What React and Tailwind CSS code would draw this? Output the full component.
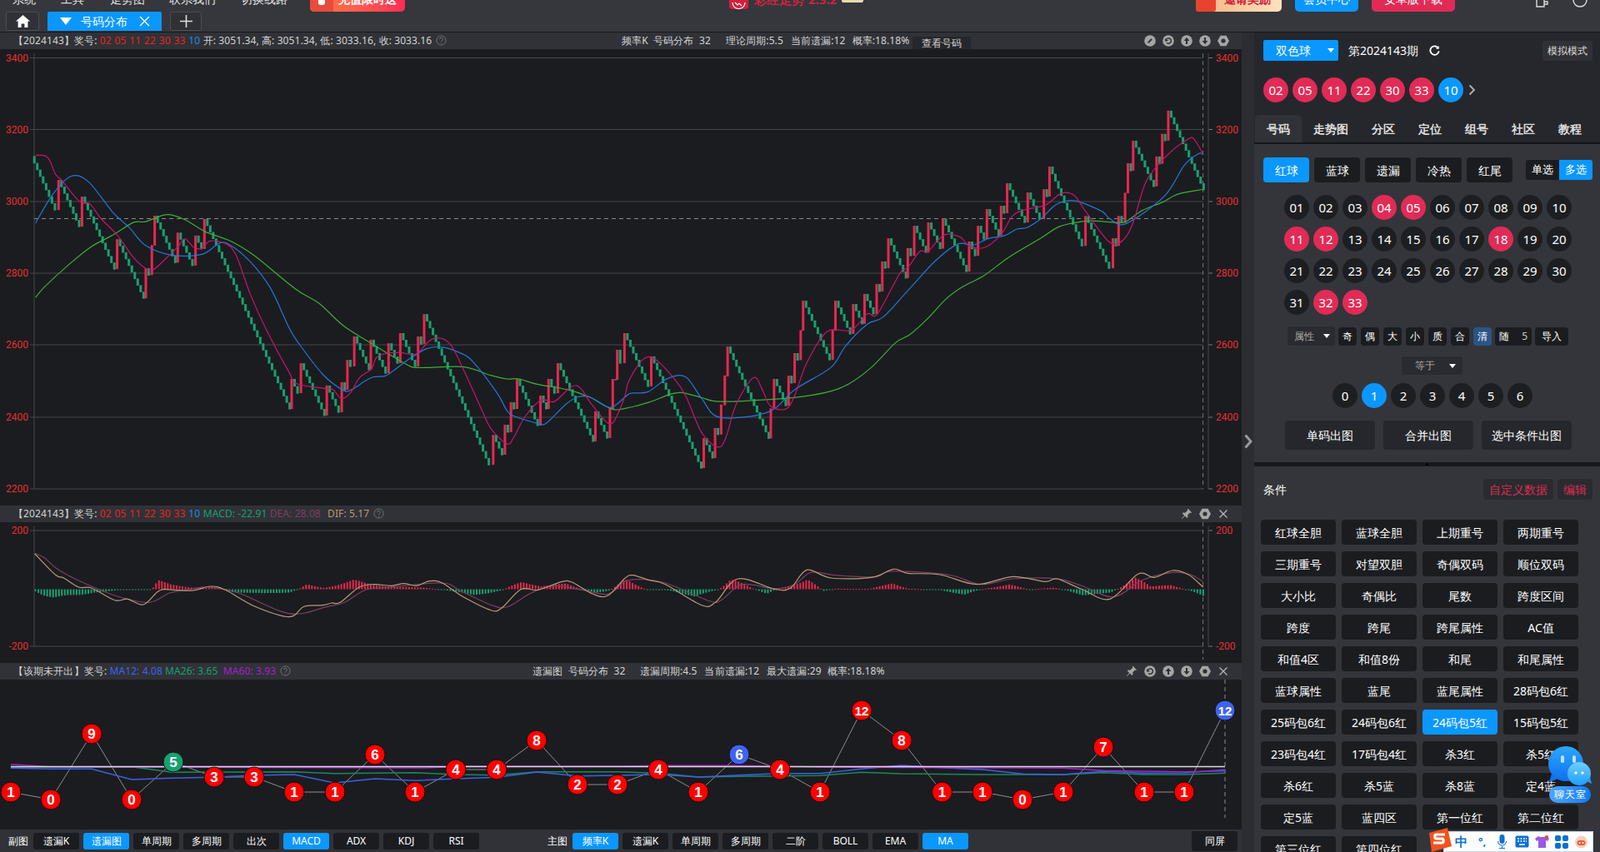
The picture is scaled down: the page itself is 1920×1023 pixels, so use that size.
import React from "react";

const m8 = (a) => a.map(([x, y]) => [x / 2.063, 50 + y / 2.8]);
const m9 = (a) => a.map(([x, y]) => [750 + x / 2.063, 50 + y / 2.8]);
const m6 = (a) => a.map(([x, y]) => [x / 1.96, 600 + y / 3]);
const m7 = (a) => a.map(([x, y]) => [750 + x / 2.063, 600 + y / 3]);
const line = (a) => a.map(([x, y]) => `${x.toFixed(1)},${y.toFixed(1)}`).join(" ");

// catmull-rom through the points, so the average lines don't look like broken sticks
function smooth(a) {
  let d = `M${a[0][0].toFixed(1)} ${a[0][1].toFixed(1)}`;
  for (let i = 0; i < a.length - 1; i++) {
    const p0 = a[i - 1] || a[i];
    const p1 = a[i];
    const p2 = a[i + 1];
    const p3 = a[i + 2] || p2;
    const c1 = [p1[0] + (p2[0] - p0[0]) / 6, p1[1] + (p2[1] - p0[1]) / 6];
    const c2 = [p2[0] - (p3[0] - p1[0]) / 6, p2[1] - (p3[1] - p1[1]) / 6];
    d += `C${c1[0].toFixed(1)} ${c1[1].toFixed(1)} ${c2[0].toFixed(1)} ${c2[1].toFixed(1)} ${p2[0].toFixed(1)} ${p2[1].toFixed(1)}`;
  }
  return d;
}

// red bars of the main chart: x, top
const reds = [
  ...m8([[145,465],[203,521],[290,664],[361,762],[376,684],[383,585],[440,642],[484,652],[506,596],[722,1134],[745,1081],[809,1156],[846,1145],[860,1070],[877,991],[918,1002],[962,1014],[991,980],[1035,991],[1050,916],[1221,1322],[1250,1288],[1265,1212],[1280,1134],[1338,1190],[1358,1134],[1381,1081],[1474,1243],[1510,1232],[1517,1134],[1528,1036],[1546,980]]),
  ...m9([[65,1058],[195,1333],[223,1299],[238,1220],[247,1122],[254,1025],[361,1233],[369,1134],[405,1123],[420,1047],[435,970],[441,871],[514,969],[521,871],[565,882],[593,848],[623,815],[637,739],[652,661],[700,694],[716,619],[751,608],[787,595],[852,672],[874,619],[896,563],[931,552],[946,476],[997,507],[1037,496],[1051,420],[1140,586],[1208,661],[1222,586],[1238,508],[1245,409],[1258,333],[1316,386],[1330,310],[1345,232]]),
];
const PITCH = 3.53;
const RED_H = 36;

function buildBars() {
  const out = [];
  let px = 41.2 - PITCH;
  let py = 50 + 385 / 2.8;
  const all = [...reds, [1443.6, null]];
  all.forEach(([x, top]) => {
    const bottom = top === null ? 50 + 498 / 2.8 : top + RED_H;
    const n = Math.max(0, Math.round((x - px) / PITCH) - (top === null ? 0 : 1));
    const step = n ? (bottom - py) / n : 0;
    if (step > 0) {
      for (let i = 0; i < n; i++) {
        out.push({ x: px + PITCH * (i + 1), y: py + i * step, h: step + 0.6, c: "#18a070" });
      }
    }
    if (top !== null) {
      out.push({ x, y: top, h: RED_H, c: "#e6284f" });
      px = x;
      py = top;
    }
  });
  return out;
}

const ma5 = [
  ...m8([[88,385],[95,381],[115,386],[125,405],[137,445],[155,470],[195,535],[222,545],[250,595],[290,650],[330,725],[360,762],[378,768],[410,730],[440,690],[458,663],[480,692],[500,695],[520,670],[560,680],[585,720],[620,850],[660,970],[715,1110],[735,1150],[800,1165],[825,1170],[845,1200],[868,1180],[890,1130],[920,1100],[930,1065],[950,1050],[990,1045],[1030,1050],[1070,1000],[1112,1013],[1150,1110],[1190,1230],[1215,1300],[1255,1352],[1272,1330],[1300,1260],[1340,1205],[1372,1210],[1415,1160],[1437,1165],[1465,1220],[1508,1285],[1530,1250]]),
  ...m9([[0,1190],[10,1140],[45,1068],[75,1068],[120,1130],[150,1190],[190,1315],[230,1363],[250,1330],[275,1220],[318,1130],[340,1170],[360,1225],[398,1235],[420,1190],[450,1080],[500,975],[560,970],[600,915],[625,915],[680,780],[700,760],[730,705],[750,705],[790,650],[830,657],[850,685],[888,693],[930,650],[960,585],[990,565],[1040,550],[1080,510],[1112,517],[1140,570],[1200,675],[1235,665],[1260,600],[1290,470],[1340,385],[1395,327],[1410,330],[1431,378]]),
];
const ma10 = [
  ...m8([[88,610],[130,515],[175,453],[218,470],[280,575],[320,625],[360,685],[425,718],[500,715],[540,680],[565,680],[620,740],[670,830],[715,960],[740,1015],[800,1120],[850,1172],[870,1170],[905,1140],[925,1127],[955,1123],[980,1100],[1010,1070],[1055,1033],[1095,1027],[1140,1047],[1170,1075],[1230,1180],[1255,1240],[1275,1260],[1335,1285],[1355,1280],[1400,1220],[1430,1195],[1460,1195],[1510,1230]]),
  ...m9([[0,1195],[15,1182],[57,1177],[105,1133],[150,1127],[190,1200],[235,1263],[355,1245],[420,1170],[510,1095],[545,1025],[600,950],[640,925],[705,830],[770,735],[825,680],[860,685],[900,662],[940,652],[970,630],[995,625],[1030,595],[1060,555],[1080,540],[1115,535],[1180,570],[1200,595],[1240,612],[1335,520],[1385,415],[1420,377],[1431,380]]),
];
const ma20 = [
  ...m8([[88,860],[110,825],[170,750],[225,690],[280,650],[330,608],[360,605],[405,583],[425,583],[460,600],[510,640],[570,670],[630,720],[730,830],[790,880],[850,955],[920,1015],[1000,1080],[1035,1096],[1145,1093],[1215,1122],[1255,1134],[1285,1134],[1330,1152],[1405,1170],[1460,1195],[1515,1235]]),
  ...m9([[0,1233],[60,1212],[110,1186],[140,1180],[190,1197],[235,1210],[360,1203],[440,1193],[510,1175],[555,1150],[610,1095],[670,1012],[705,985],[750,930],[795,865],[835,825],[890,785],[950,725],[1030,660],[1075,622],[1130,605],[1165,603],[1215,608],[1240,605],[1280,568],[1330,540],[1370,512],[1431,497]]),
];

const macdTan = [
  ...m6([[82,195],[130,270],[150,282],[185,315],[215,318],[270,362],[300,358],[337,378],[370,332],[385,323],[410,325],[455,327],[495,312],[530,325],[600,385],[680,422],[715,385],[760,380],[780,372],[800,370],[845,315],[880,305],[920,310],[950,302],[980,310],[1010,293],[1040,300],[1090,350],[1155,398],[1180,390],[1225,323],[1265,325],[1320,296],[1345,297],[1395,340],[1430,345]]),
  ...m7([[0,283],[20,272],[60,290],[100,305],[190,380],[225,368],[280,285],[370,322],[410,318],[450,253],[510,282],[610,280],[665,250],[700,265],[780,270],[870,305],[960,277],[1040,295],[1070,285],[1130,322],[1200,358],[1270,268],[1310,280],[1355,255],[1395,270],[1431,315]]),
];
const macdPink = [
  ...m6([[82,193],[105,210],[135,250],[190,295],[270,345],[350,370],[400,335],[450,322],[490,315],[560,335],[680,410],[770,385],[810,370],[860,325],[920,315],[1040,300],[1085,330],[1160,382],[1195,385],[1250,335],[1300,310],[1370,325],[1430,340]]),
  ...m7([[0,295],[40,287],[100,300],[210,365],[240,360],[290,305],[370,320],[420,305],[460,262],[520,272],[620,278],[660,258],[800,270],[880,305],[960,285],[1070,285],[1130,310],[1210,350],[1280,290],[1355,262],[1400,270],[1431,295]]),
];
// histogram outline: negative goes up (red), positive goes down (green), real px
const envelope = [
  ...m6([[80,5],[100,20],[125,32],[185,22],[220,10],[280,3],[355,0],[370,-28],[400,-15],[440,-8],[520,-3],[540,8],[620,18],[680,10],[700,0],[720,-16],[760,-6],[830,-30],[870,-15],[960,-8],[1000,-4],[1040,2],[1110,22],[1180,3],[1225,-32],[1270,-10],[1330,-18],[1400,15],[1430,5]]),
  ...m7([[0,-30],[50,0],[110,5],[170,22],[230,2],[260,-40],[310,-5],[350,15],[370,2],[450,-32],[490,5],[520,-2],[600,-1],[660,-18],[700,-2],[780,3],[840,18],[890,-3],[950,-15],[1000,1],[1060,-7],[1130,18],[1200,15],[1260,-40],[1300,-8],[1350,-17],[1431,22]]),
].map(([x, y]) => [x, y - 600]);

function histBars() {
  const out = [];
  for (let x = 41.5; x < 1443; x += PITCH) {
    let v = 0;
    for (let i = 0; i < envelope.length - 1; i++) {
      const [x1, y1] = envelope[i];
      const [x2, y2] = envelope[i + 1];
      if (x >= x1 && x <= x2) v = y1 + ((y2 - y1) * (x - x1)) / (x2 - x1);
    }
    const j = 1 + 0.2 * Math.sin(x * 1.7);
    out.push({ x, v: v * j });
  }
  return out;
}

const missBalls = [
  [13,951,"1"],[61,960,"0"],[110,881,"9"],[158,960,"0"],[208,915,"5","#18a070"],[257,933,"3"],[305,933,"3"],[353,951,"1"],[402,951,"1"],[450,906,"6"],[498,951,"1"],[547,924,"4"],[596,924,"4"],[644,889,"8"],[693,942,"2"],[741,942,"2"],[790,924,"4"],[838,951,"1"],[887,906,"6","#3f63f0"],[936,924,"4"],[984,951,"1"],[1034,853,"12"],[1082,889,"8"],[1130.5,951,"1"],[1179,951,"1"],[1227,960,"0"],[1276,951,"1"],[1324,897,"7"],[1373,951,"1"],[1421,951,"1"],[1470,853,"12","#3f63f0"],
];
const missBlue = [
  ...m6([[25,967],[120,970],[215,970],[310,1008],[405,1003],[500,1000],[597,993],[692,990],[787,1020],[882,1005],[977,1012],[1073,1005],[1169,1000],[1263,981],[1359,995],[1453,993]]),
  ...m7([[83,990],[182,999],[283,992],[384,986],[483,986],[585,970],[684,957],[785,965],[885,972],[985,988],[1086,990],[1185,978],[1286,985],[1385,984],[1486,973]]),
];
const missGreen = [
  ...m6([[25,963],[310,962],[405,982],[692,980],[787,986],[977,983],[1073,990],[1169,992],[1263,980],[1453,980]]),
  ...m7([[83,985],[182,999],[283,997],[483,994],[585,982],[684,987],[885,990],[1086,990],[1185,983],[1286,990],[1385,990],[1486,985]]),
];
const missPurple = [
  ...m6([[25,953],[120,962],[800,965],[1000,966],[1100,960],[1453,960]]),
  ...m7([[83,958],[283,958],[484,963],[1086,967],[1185,976],[1385,980],[1486,977]]),
];

const PRICES = [[3400,69.5],[3200,155.5],[3000,242],[2800,328],[2600,414],[2400,501],[2200,587]];
const SANS = "Roboto, 'Noto Sans CJK SC', sans-serif";

function MainChart() {
  return (
    <svg className="block w-full h-full" viewBox="0 59 1490 548" style={{ fontFamily: SANS }}>
      {PRICES.map(([p, y]) => (
        <g key={p}>
          <line x1="41" x2="1444" y1={y} y2={y} stroke="#45474b" />
          <line x1="36" x2="41" y1={y} y2={y} stroke="#45474b" />
          <line x1="1450" x2="1455" y1={y} y2={y} stroke="#777" />
          <text x="34" y={y + 4} textAnchor="end" fontSize="12" fill="#e8302c">{p}</text>
          <text x="1459" y={y + 4} fontSize="12" fill="#e8302c">{p}</text>
        </g>
      ))}
      <line x1="41" x2="41" y1="64" y2="587" stroke="#45474b" />
      <line x1="1450" x2="1450" y1="64" y2="587" stroke="#45474b" />
      <line x1="1443.6" x2="1443.6" y1="64" y2="587" stroke="#777" strokeDasharray="5 4" />
      <line x1="41" x2="1444" y1="262.5" y2="262.5" stroke="#8a8a8a" strokeDasharray="5 4" />
      {buildBars().map((b, i) => (
        <rect key={i} x={b.x - 1.5} y={b.y} width="3" height={b.h} fill={b.c} />
      ))}
      <path d={smooth(ma20)} fill="none" stroke="#3cb034" strokeWidth="1.2" />
      <path d={smooth(ma10)} fill="none" stroke="#2278d8" strokeWidth="1.2" />
      <path d={smooth(ma5)} fill="none" stroke="#c8146e" strokeWidth="1.2" />
    </svg>
  );
}

function MacdChart() {
  return (
    <svg className="block w-full h-full" viewBox="0 627 1490 169" style={{ fontFamily: SANS }}>
      {[[200,637],[-200,776]].map(([p, y]) => (
        <g key={p}>
          <line x1="41" x2="1444" y1={y} y2={y} stroke="#45474b" />
          <line x1="36" x2="41" y1={y} y2={y} stroke="#45474b" />
          <line x1="1450" x2="1455" y1={y} y2={y} stroke="#777" />
          <text x="34" y={y + 4} textAnchor="end" fontSize="12" fill="#e8302c">{p}</text>
          <text x="1459" y={y + 4} fontSize="12" fill="#e8302c">{p}</text>
        </g>
      ))}
      <line x1="41" x2="41" y1="632" y2="776" stroke="#45474b" />
      <line x1="1450" x2="1450" y1="632" y2="776" stroke="#45474b" />
      <line x1="1443.6" x2="1443.6" y1="627" y2="792" stroke="#777" strokeDasharray="5 4" />
      {histBars().map((b, i) => (
        <rect key={i} x={b.x} y={b.v < 0 ? 707.5 + b.v : 707.5} width="2" height={Math.max(1, Math.abs(b.v))} fill={b.v < 0 ? "#e6284f" : "#18a070"} />
      ))}
      <path d={smooth(macdPink)} fill="none" stroke="#7d3f62" strokeWidth="1.2" />
      <path d={smooth(macdTan)} fill="none" stroke="#b89a78" strokeWidth="1.2" />
    </svg>
  );
}

function MissChart() {
  return (
    <svg className="block w-full h-full" viewBox="0 816 1490 180" style={{ fontFamily: "'Liberation Sans', sans-serif" }}>
      <line x1="1470" x2="1470" y1="816" y2="982" stroke="#8a8a8a" strokeDasharray="5 4" />
      <polyline points={line(missBalls.map((b) => [b[0], b[1]]))} fill="none" stroke="#8d8d8d" />
      <polyline points={line(missGreen)} fill="none" stroke="#17895f" strokeWidth="1.5" />
      <polyline points={line(missBlue)} fill="none" stroke="#3f5fe0" strokeWidth="1.5" />
      <polyline points={line(missPurple)} fill="none" stroke="#a41fd0" strokeWidth="1.5" />
      <line x1="13" x2="1470" y1="920.5" y2="920.5" stroke="#dcdcdc" strokeWidth="1.5" />
      {missBalls.map(([x, y, t, c], i) => (
        <g key={i}>
          <circle cx={x} cy={y} r="12" fill={c || "#ff0000"} stroke="#111" />
          <text x={x} y={y + 6} textAnchor="middle" fontSize={t.length > 1 ? 15 : 17} fontWeight="700" fill="#fff">{t}</text>
        </g>
      ))}
    </svg>
  );
}

function Help() {
  return (
    <svg className="w-[13px] h-[13px] inline-block ml-[5px] align-[-2px]" viewBox="0 0 14 14" fill="none" stroke="#777">
      <circle cx="7" cy="7" r="6" />
      <path d="M5 5.5a2 2 0 1 1 3 1.7c-.7.4-1 .8-1 1.6M7 10.2v1" />
    </svg>
  );
}

function ToolIcon({ kind }) {
  const inner = {
    edit: <path d="M4.2 9.8 4.6 8l3.8-3.8 1.4 1.4L6 9.4z" fill="#2e3035" />,
    undo: <path d="M4 7a3.2 3.2 0 1 1 1 2.4M3.4 4.6 4 7.2l2.4-.8" stroke="#2e3035" strokeWidth="1.4" fill="none" />,
    up: <path d="M7 3 3.6 7H6v4h2V7h2.4z" fill="#2e3035" />,
    down: <path d="M7 11 3.6 7H6V3h2v4h2.4z" fill="#2e3035" />,
  }[kind];
  if (kind === "hex") {
    return (
      <svg className="w-[14px] h-[14px]" viewBox="0 0 14 14">
        <path d="M3.5.8h7L14 7l-3.5 6.2h-7L0 7z" fill="#a5a5a5" />
        <circle cx="7" cy="7" r="2.6" fill="#2e3035" />
      </svg>
    );
  }
  if (kind === "pin") {
    return (
      <svg className="w-[14px] h-[14px]" viewBox="0 0 14 14">
        <path d="M8.6.8 13.2 5.4l-1.2.6-1-.4-2.8 3 .2 2.4-1 1-2.4-2.6L1.4 13l-.4-.4 3.2-3.6-2.5-2.4 1-1 2.4.2 3-2.8-.4-1z" fill="#a5a5a5" />
      </svg>
    );
  }
  if (kind === "x") {
    return (
      <svg className="w-[14px] h-[14px]" viewBox="0 0 14 14" stroke="#b5b5b5" strokeWidth="1.3">
        <path d="M2.5 2.5l9 9M11.5 2.5l-9 9" />
      </svg>
    );
  }
  return (
    <svg className="w-[14px] h-[14px]" viewBox="0 0 14 14">
      <circle cx="7" cy="7" r="6.8" fill="#a5a5a5" />
      {inner}
    </svg>
  );
}

function ChartHead({ children, icons, right }) {
  return (
    <div className="h-[20px] shrink-0 bg-[#303237] flex items-center text-[12px] leading-[20px] text-[#d4d4d4] relative whitespace-nowrap tracking-[0.1px]">
      {children}
      {right}
      <div className="absolute right-[15px] top-[3px] flex gap-[8px]">
        {icons.map((k, i) => (
          <ToolIcon key={i} kind={k} />
        ))}
      </div>
    </div>
  );
}

const Nums = () => (
  <span className="text-[#e8241f] tracking-[0.3px]">02 05 11 22 30 33 <span className="text-[#1c8be8]">10</span></span>
);

function Ball({ n, on, color }) {
  const bg = on ? color || "bg-[#e12b56]" : "bg-[#1d1e22]";
  return (
    <div className={`w-[30px] h-[30px] rounded-full flex items-center justify-center text-[15px] text-white ${bg}`}>
      {n}
    </div>
  );
}

function BarBtn({ label, on }) {
  return (
    <div className={`w-[55px] h-[20px] rounded-[3px] flex items-center justify-center text-[12px] text-white ${on ? "bg-[#0a97ff]" : "bg-[#1b1c20]"}`}>
      {label}
    </div>
  );
}

const Caret = ({ className }) => (
  <svg className={className} width="8" height="5" viewBox="0 0 8 5"><path d="M0 0h8L4 5z" fill="#fff" /></svg>
);

const REDS_ON = [4, 5, 11, 12, 18, 32, 33];
const CONDS = ["红球全胆","蓝球全胆","上期重号","两期重号","三期重号","对望双胆","奇偶双码","顺位双码","大小比","奇偶比","尾数","跨度区间","跨度","跨尾","跨尾属性","AC值","和值4区","和值8份","和尾","和尾属性","蓝球属性","蓝尾","蓝尾属性","28码包6红","25码包6红","24码包6红","24码包5红","15码包5红","23码包4红","17码包4红","杀3红","杀5红","杀6红","杀5蓝","杀8蓝","定4蓝","定5蓝","蓝四区","第一位红","第二位红","第三位红","第四位红"];

function RightPanel() {
  return (
    <div className="w-[415px] shrink-0 flex flex-col text-white">
      <div className="h-[99px] bg-[#26272c] pt-[9px] pl-[11px]">
        <div className="flex items-center h-[25px]">
          <div className="w-[90px] h-[25px] rounded-[2px] bg-[#0a97ff] flex items-center text-[14px] pl-[15px] relative">
            双色球
            <Caret className="absolute right-[5px] top-[10px]" />
          </div>
          <span className="ml-[12px] text-[14px]">第2024143期</span>
          <svg className="ml-[13px] w-[13px] h-[13px]" viewBox="0 0 14 14" fill="none" stroke="#fff" strokeWidth="2">
            <path d="M12 4.5A5.6 5.6 0 1 0 12.6 8" />
            <path d="M12.5 1v4h-4" fill="#fff" stroke="none" />
          </svg>
          <div className="ml-auto mr-[9px] w-[60px] h-[24px] rounded-[2px] bg-[#303136] flex items-center justify-center text-[12px] text-[#ddd]">模拟模式</div>
        </div>
        <div className="flex gap-[5px] mt-[20px] items-center">
          {["02","05","11","22","30","33"].map((n) => <Ball key={n} n={n} on />)}
          <Ball n="10" on color="bg-[#0a97ff]" />
          <svg className="ml-[1px] w-[9px] h-[14px]" viewBox="0 0 9 14" fill="none" stroke="#aaa" strokeWidth="2"><path d="M1.5 1.5 7 7l-5.5 5.5" /></svg>
        </div>
      </div>
      <div className="h-[35px] bg-[#26272c] flex items-stretch text-[14px] font-bold text-[#dcdcdc] border-b-[2px] border-[#141518] pl-[1px]">
        <div className="w-[56px] bg-[#303237] rounded-t-[5px] flex items-center justify-center">号码</div>
        <div className="w-[70px] flex items-center justify-center">走势图</div>
        <div className="w-[56px] flex items-center justify-center">分区</div>
        <div className="w-[56px] flex items-center justify-center">定位</div>
        <div className="w-[56px] flex items-center justify-center">组号</div>
        <div className="w-[56px] flex items-center justify-center">社区</div>
        <div className="w-[56px] flex items-center justify-center">教程</div>
      </div>
      <div className="h-[382px] bg-[#33353a] pt-[16px] shrink-0">
        <div className="flex items-center pl-[11px]">
          {["红球","蓝球","遗漏","冷热","红尾"].map((t, i) => (
            <div key={t} className={`w-[55px] h-[30px] mr-[6px] rounded-[4px] flex items-center justify-center text-[14px] ${i === 0 ? "bg-[#0a97ff]" : "bg-[#1b1c20]"}`}>{t}</div>
          ))}
          <div className="ml-[10px] flex h-[24px] w-[80px] rounded-[3px] overflow-hidden text-[13px]">
            <div className="w-[40px] bg-[#1b1c20] flex items-center justify-center">单选</div>
            <div className="w-[40px] bg-[#0a97ff] flex items-center justify-center">多选</div>
          </div>
        </div>
        <div className="mt-[15px] ml-[36px] grid grid-cols-[repeat(10,30px)] gap-x-[5px] gap-y-[8px]">
          {Array.from({ length: 33 }, (_, i) => i + 1).map((n) => (
            <Ball key={n} n={String(n).padStart(2, "0")} on={REDS_ON.includes(n)} />
          ))}
        </div>
        <div className="mt-[14px] ml-[40px] flex items-center gap-[5px] text-[12px]">
          <div className="w-[57px] h-[23px] rounded-[4px] bg-[#2a2b30] text-[#aaa] flex items-center pl-[8px] mr-[-1px] relative">
            属性
            <Caret className="absolute right-[6px] top-[9px]" />
          </div>
          {["奇","偶","大","小","质","合"].map((t) => (
            <div key={t} className="w-[22px] h-[22px] rounded-[4px] bg-[#1b1c20] flex items-center justify-center">{t}</div>
          ))}
          <div className="w-[22px] h-[22px] rounded-[4px] bg-[#2a5585] flex items-center justify-center">清</div>
          <div className="w-[44px] h-[22px] -ml-[1px] rounded-[4px] bg-[#1b1c20] flex items-center justify-between px-[5px]"><span>随</span><span className="text-[#ccc]">5</span></div>
          <div className="w-[40px] h-[22px] -ml-[1px] rounded-[4px] bg-[#1b1c20] flex items-center justify-center">导入</div>
        </div>
        <div className="mt-[13px] ml-[177px] w-[73px] h-[22px] rounded-[3px] bg-[#2a2b30] text-[12px] text-[#aaa] flex items-center pl-[16px] relative">
          等于
          <Caret className="absolute right-[8px] top-[9px]" />
        </div>
        <div className="mt-[10px] ml-[94px] flex gap-[5px]">
          {[0,1,2,3,4,5,6].map((n) => <Ball key={n} n={n} on={n === 1} color="bg-[#0a97ff]" />)}
        </div>
        <div className="mt-[15px] ml-[37px] flex gap-[10px] text-[14px]">
          {["单码出图","合并出图","选中条件出图"].map((t) => (
            <div key={t} className="w-[108px] h-[35px] rounded-[4px] bg-[#26272c] flex items-center justify-center">{t}</div>
          ))}
        </div>
      </div>
      <div className="h-[5px] bg-[#17181b] shrink-0 flex justify-center items-center">
        <div className="w-[3px] h-[3px] bg-black rounded-full" />
      </div>
      <div className="flex-1 min-h-0 bg-[#33353a] overflow-hidden">
        <div className="h-[64px] flex items-start pt-[15px] pl-[11px] pr-[9px]">
          <span className="text-[14px] leading-[25px]">条件</span>
          <div className="ml-auto w-[84px] h-[25px] rounded-[4px] bg-[#2a2b2f] text-[#dd2b52] text-[14px] flex items-center justify-center">自定义数据</div>
          <div className="ml-[5px] w-[42px] h-[25px] rounded-[4px] bg-[#2a2b2f] text-[#dd2b52] text-[14px] flex items-center justify-center">编辑</div>
        </div>
        <div className="pl-[8px] grid grid-cols-[repeat(4,90px)] gap-x-[7px] gap-y-[8px]">
          {CONDS.map((t) => (
            <div key={t} className={`h-[30px] rounded-[4px] flex items-center justify-center text-[14px] ${t === "24码包5红" ? "bg-[#0a97ff]" : "bg-[#1b1c20]"}`}>{t}</div>
          ))}
        </div>
      </div>
    </div>
  );
}

function TopBar() {
  return (
    <div className="h-[38px] shrink-0 bg-[#35373c] text-[#e4e4e4]">
      <div className="h-[14px] flex items-start overflow-hidden text-[14px] leading-[20px]">
        <span className="ml-[15px] -mt-[11px]">系统</span>
        <span className="ml-[30px] -mt-[11px]">工具</span>
        <span className="ml-[31px] -mt-[11px]">走势图</span>
        <span className="ml-[29px] -mt-[11px]">联系我们</span>
        <span className="ml-[30px] -mt-[11px]">切换线路</span>
        <div className="ml-[27px] w-[114px] h-[14px] rounded-b-[5px] bg-gradient-to-r from-[#ff7b45] to-[#ff2a55] flex text-white font-bold overflow-hidden">
          <div className="w-[28px] h-[14px] bg-[#e84b3c] flex justify-center"><div className="w-[8px] h-[6px] bg-white rounded-b-[3px]" /></div>
          <span className="-mt-[11px] ml-[6px]">充值限时送</span>
        </div>
        <div className="ml-[389px] w-[23px] h-[11px] bg-[#d41f3c] rounded-b-[4px] flex justify-center">
          <svg className="w-[19px] h-[11px]" viewBox="0 0 19 11" fill="none" stroke="#fff" strokeWidth="1.2"><path d="M2 3a7.5 7.5 0 0 0 15 0M5 3l3 3 2-2 3 3" /></svg>
        </div>
        <span className="ml-[7px] -mt-[11px] text-[#cf2340] text-[15px] font-bold">彩经走势</span>
        <span className="ml-[5px] -mt-[11px] text-[#cf2340] text-[15px] font-bold">2.3.2</span>
        <div className="ml-[6px] w-[26px] h-[3px] bg-[#ead9b0] rounded-b-[2px]" />
        <div className="ml-auto w-[103px] h-[14px] rounded-b-[5px] bg-gradient-to-r from-[#f2b37f] to-[#ffe2bd] text-[#cf2340] font-bold flex justify-center relative">
          <div className="absolute left-0 top-0 w-[24px] h-[14px] bg-[#e8432e] rounded-b-[3px]" />
          <span className="-mt-[11px] ml-[20px]">邀请奖励</span>
        </div>
        <div className="ml-[16px] w-[76px] h-[14px] rounded-b-[5px] bg-[#0a97ff] text-white flex justify-center"><span className="-mt-[11px]">会员中心</span></div>
        <div className="ml-[16px] w-[100px] h-[14px] rounded-b-[5px] bg-[#e12b56] text-white flex justify-center"><span className="-mt-[11px]">安卓版下载</span></div>
        <svg className="ml-[96px] w-[18px] h-[14px]" viewBox="0 0 18 14" fill="none" stroke="#ddd" strokeWidth="1.4"><path d="M2 0v8h9V0M11 2h4v3h-4" /></svg>
        <svg className="ml-[26px] mr-[14px] w-[20px] h-[12px]" viewBox="0 0 20 12" fill="none" stroke="#ddd" strokeWidth="1.4"><path d="M2 0a8 8 0 0 0 16 0" /></svg>
      </div>
      <div className="h-[23px] flex items-stretch pl-[7px]">
        <div className="w-[40px] border border-[#4a4c50] rounded-[2px] bg-[#2f3136] flex items-center justify-center">
          <svg className="w-[17px] h-[15px]" viewBox="0 0 17 15" fill="#fff"><path d="M8.5 0 0 7.5h2.6V15h4v-4.5h3.8V15h4V7.5H17z" /></svg>
        </div>
        <div className="ml-[10px] w-[137px] bg-[#0a97ff] rounded-t-[2px] flex items-center text-white text-[14px] pl-[15px]">
          <svg className="w-[14px] h-[9px]" viewBox="0 0 14 9"><path d="M0 0h14L7 9z" fill="#fff" /></svg>
          <span className="ml-[11px]">号码分布</span>
          <svg className="ml-[14px] w-[13px] h-[13px]" viewBox="0 0 12 12" stroke="#fff" strokeWidth="1.2"><path d="M1 1l10 10M11 1 1 11" /></svg>
        </div>
        <div className="ml-[10px] w-[38px] border border-[#4a4c50] rounded-[2px] bg-[#2f3136] flex items-center justify-center">
          <svg className="w-[15px] h-[15px]" viewBox="0 0 15 15" stroke="#ddd" strokeWidth="1.6"><path d="M7.5 0v15M0 7.5h15" /></svg>
        </div>
      </div>
    </div>
  );
}

function Sogou() {
  return (
    <div className="absolute left-[1712px] top-[994px] w-[200px] h-[29px]">
      <div className="absolute left-[20px] top-[4px] right-0 bottom-0 bg-white border border-[#c9d6ee] flex items-center pl-[13px] gap-[7px]">
        <span className="text-[#0b6fd4] font-bold text-[15px] w-[17px] leading-none">中</span>
        <span className="text-[#0b6fd4] font-bold text-[13px] w-[17px] leading-none text-center">°,</span>
        <svg className="w-[17px] h-[17px]" viewBox="0 0 17 17" fill="#0b6fd4"><rect x="5.5" y="0" width="6" height="11" rx="3" /><path d="M3 8a5.5 5.5 0 0 0 11 0h-1a4.5 4.5 0 0 1-9 0zM8 14h1v2h3v1H5v-1h3z" /></svg>
        <svg className="w-[17px] h-[15px]" viewBox="0 0 17 15"><rect x=".5" y=".5" width="16" height="14" rx="2" fill="#0b6fd4" /><path d="M3 4h2M6.5 4h2M10 4h2M13 4h1M3 7h2M6.5 7h2M10 7h2M13 7h1M5 11h7" stroke="#fff" strokeWidth="1.3" /></svg>
        <svg className="w-[17px] h-[16px]" viewBox="0 0 17 16"><path d="M4 1 0 4l2 3 2-1v9h9V6l2 1 2-3-4-3-2 1H6z" fill="#9a5ae0" /><circle cx="14" cy="2" r="2" fill="#f0432e" /></svg>
        <svg className="w-[16px] h-[16px]" viewBox="0 0 16 16" fill="#0b6fd4"><rect width="7" height="7" rx="2" /><rect x="9" width="7" height="7" rx="2" /><rect y="9" width="7" height="7" rx="2" /><rect x="9" y="9" width="7" height="7" rx="2" /></svg>
        <svg className="w-[17px] h-[17px]" viewBox="0 0 17 17"><circle cx="8.5" cy="9" r="7.5" fill="#f7cfc4" /><rect x="3.5" y="7" width="10" height="6" rx="3" fill="#e8612e" /><circle cx="6.5" cy="10" r="1" fill="#fff" /><circle cx="10.5" cy="10" r="1" fill="#fff" /></svg>
      </div>
      <svg className="absolute left-0 top-0 w-[30px] h-[29px]" viewBox="0 0 30 29">
        <path d="M3 6 25 0l5 22-24 7z" fill="#f4511e" />
        <path d="M22 8H12c-3 0-3 5 0 5h6c3 0 3 5 0 5H8" fill="none" stroke="#fff" strokeWidth="3.2" />
      </svg>
    </div>
  );
}

function Chat() {
  return (
    <div className="absolute left-[1858px] top-[895px] w-[54px] h-[70px] text-white">
      <svg className="absolute left-0 top-0 w-[54px] h-[50px]" viewBox="0 0 54 50">
        <defs>
          <linearGradient id="bigB" x1="0" y1="0" x2="0" y2="1"><stop offset="0" stopColor="#2ba8ff" /><stop offset="1" stopColor="#1070ee" /></linearGradient>
          <linearGradient id="smallB" x1="0" y1="0" x2="0" y2="1"><stop offset="0" stopColor="#6fd0ff" /><stop offset="1" stopColor="#1f9cff" /></linearGradient>
        </defs>
        <circle cx="21" cy="22" r="21" fill="url(#bigB)" />
        <path d="M4 34 1 44l11-4z" fill="#1070ee" />
        <rect x="15" y="12" width="4" height="9" rx="2" fill="#bfe3ff" />
        <rect x="29" y="12" width="4" height="9" rx="2" fill="#bfe3ff" />
        <circle cx="37" cy="34" r="14" fill="url(#smallB)" />
        <path d="M46 43l6 3-2-8z" fill="#1f9cff" />
        <circle cx="33" cy="33" r="1.8" fill="#e5f5ff" />
        <circle cx="41" cy="33" r="1.8" fill="#e5f5ff" />
      </svg>
      <div className="absolute left-[1px] top-[49px] w-[50px] h-[20px] rounded-full bg-gradient-to-r from-[#4aa6ff] to-[#0a7bf0] text-[12px] flex items-center justify-center tracking-[1px]">聊天室</div>
    </div>
  );
}

function Bottom() {
  return (
    <div className="h-[27px] shrink-0 bg-[#303237] flex items-center text-[12px] text-white pl-[10px] pr-[5px]">
      <span className="w-[24px] mr-[6px]">副图</span>
      <div className="flex gap-[5px]">
        {["遗漏K","遗漏图","单周期","多周期","出次","MACD","ADX","KDJ","RSI"].map((t) => (
          <BarBtn key={t} label={t} on={t === "遗漏图" || t === "MACD"} />
        ))}
      </div>
      <span className="w-[24px] ml-[82px] mr-[6px]">主图</span>
      <div className="flex gap-[5px]">
        {["频率K","遗漏K","单周期","多周期","二阶","BOLL","EMA","MA"].map((t) => (
          <BarBtn key={t} label={t} on={t === "频率K" || t === "MA"} />
        ))}
      </div>
      <div className="ml-auto w-[55px] h-[24px] rounded-[3px] bg-[#1b1c20] flex items-center justify-center">同屏</div>
    </div>
  );
}

export default function App() {
  return (
    <div className="w-[1920px] h-[1023px] overflow-hidden relative flex flex-col bg-[#2b2d32] font-['Roboto','Noto_Sans_CJK_SC',sans-serif]">
      <TopBar />
      <div className="h-[1px] shrink-0 bg-[#17181b]" />
      <div className="flex-1 min-h-0 flex">
        <div className="w-[1490px] shrink-0 flex flex-col">
          <ChartHead
            icons={["edit","undo","up","down","hex"]}
            right={
              <div className="absolute left-[746px] top-0 flex items-center">
                <span>频率K&nbsp;&nbsp;号码分布&nbsp;&nbsp;32</span>
                <span className="ml-[18px]">理论周期:5.5</span>
                <span className="ml-[9px]">当前遗漏:12</span>
                <span className="ml-[8px]">概率:18.18%</span>
                <span className="absolute left-[349px] top-[5px] w-[70px] h-[15px] bg-[#26272c] leading-[16px] text-center">查看号码</span>
              </div>
            }
          >
            <span className="ml-[16px]">【2024143】奖号: <Nums /> 开: 3051.34, 高: 3051.34, 低: 3033.16, 收: 3033.16<Help /></span>
          </ChartHead>
          <div className="h-[548px] shrink-0 bg-[#1b1c20]"><MainChart /></div>
          <ChartHead icons={["pin","hex","x"]}>
            <span className="ml-[16px]">【2024143】奖号: <Nums /> <span className="text-[#18a070]">MACD: -22.91</span> <span className="text-[#7d3f62]">DEA: 28.08</span> <span className="text-[#b89a78] ml-[5px]">DIF: 5.17</span><Help /></span>
          </ChartHead>
          <div className="h-[169px] shrink-0 bg-[#1b1c20]"><MacdChart /></div>
          <ChartHead
            icons={["pin","undo","up","down","hex","x"]}
            right={
              <div className="absolute left-[639px] top-0 flex items-center">
                <span>遗漏图&nbsp;&nbsp;号码分布&nbsp;&nbsp;32</span>
                <span className="ml-[17px]">遗漏周期:4.5</span>
                <span className="ml-[9px]">当前遗漏:12</span>
                <span className="ml-[9px]">最大遗漏:29</span>
                <span className="ml-[7px]">概率:18.18%</span>
              </div>
            }
          >
            <span className="ml-[16px]">【该期未开出】奖号: <span className="text-[#3f63f0]">MA12: 4.08</span> <span className="text-[#18a070]">MA26: 3.65</span> <span className="text-[#a41fd0] ml-[3px]">MA60: 3.93</span><Help /></span>
          </ChartHead>
          <div className="h-[180px] shrink-0 bg-[#1b1c20]"><MissChart /></div>
          <Bottom />
        </div>
        <div className="w-[15px] shrink-0 flex items-start justify-center pt-[482px]">
          <svg className="w-[10px] h-[18px]" viewBox="0 0 10 18" fill="none" stroke="#999" strokeWidth="3"><path d="M1.5 1.5 8 9l-6.5 7.5" /></svg>
        </div>
        <RightPanel />
      </div>
      <Chat />
      <Sogou />
    </div>
  );
}
